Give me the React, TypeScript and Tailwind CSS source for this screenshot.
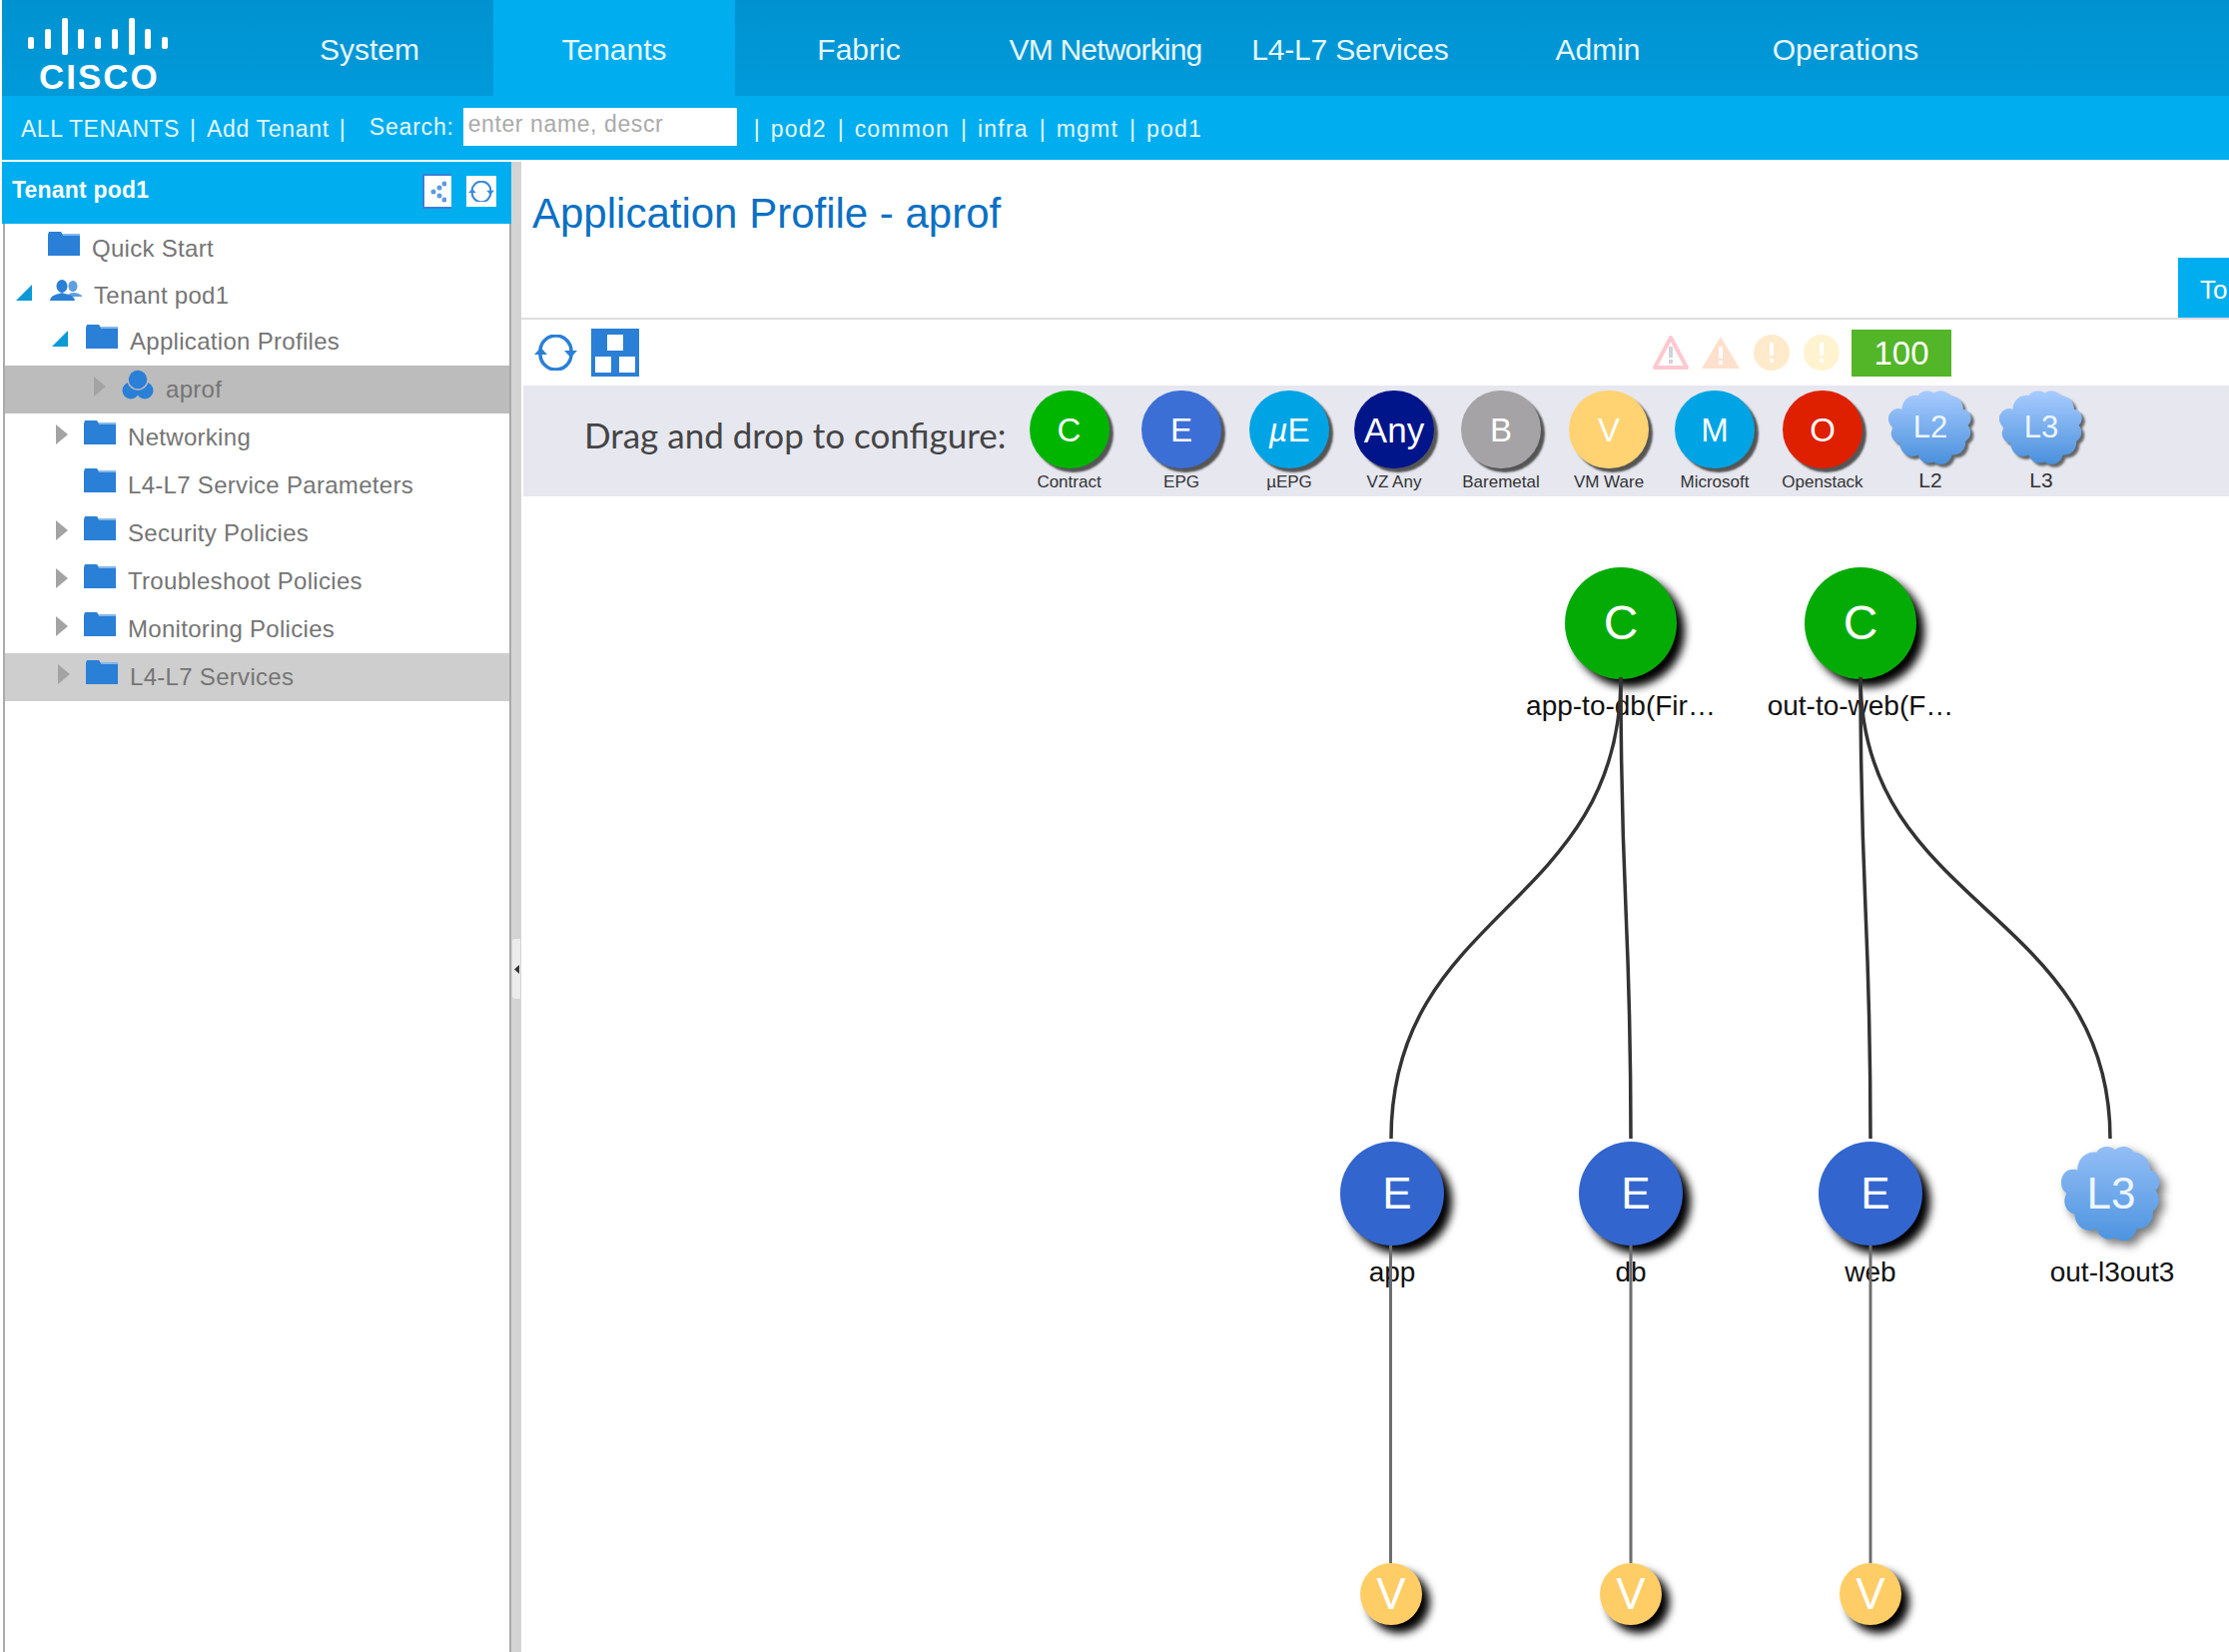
import React from 'react';

const navItems = [
  { label: 'System', width: 'w-[248px]', active: false, extra: '' },
  { label: 'Tenants', width: 'w-[242px]', active: true, extra: '' },
  { label: 'Fabric', width: 'w-[248px]', active: false, extra: '' },
  { label: 'VM Networking', width: 'w-[246px]', active: false, extra: 'tracking-[-0.8px]' },
  { label: 'L4-L7 Services', width: 'w-[244px]', active: false, extra: 'tracking-[-0.2px]' },
  { label: 'Admin', width: 'w-[252px]', active: false, extra: '' },
  { label: 'Operations', width: 'w-[244px]', active: false, extra: '' },
];

const quickTenants = ['pod2', 'common', 'infra', 'mgmt', 'pod1'];

type TreeRow = {
  label: string;
  icon: 'folder' | 'users' | 'profile';
  arrow?: 'open' | 'closed';
  indent: string;
  height: string;
  bg?: string;
};

const treeRows: TreeRow[] = [
  { label: 'Quick Start', icon: 'folder', indent: 'w-[43px]', height: 'h-[48px] pt-[2px]' },
  { label: 'Tenant pod1', icon: 'users', arrow: 'open', indent: 'w-[45px]', height: 'h-[46px] pt-[2px]' },
  { label: 'Application Profiles', icon: 'folder', arrow: 'open', indent: 'w-[81px]', height: 'h-[48px]' },
  { label: 'aprof', icon: 'profile', arrow: 'closed', indent: 'w-[117px]', height: 'h-[48px]', bg: 'bg-[#bcbcbc]' },
  { label: 'Networking', icon: 'folder', arrow: 'closed', indent: 'w-[79px]', height: 'h-[48px]' },
  { label: 'L4-L7 Service Parameters', icon: 'folder', indent: 'w-[79px]', height: 'h-[48px]' },
  { label: 'Security Policies', icon: 'folder', arrow: 'closed', indent: 'w-[79px]', height: 'h-[48px]' },
  { label: 'Troubleshoot Policies', icon: 'folder', arrow: 'closed', indent: 'w-[79px]', height: 'h-[48px]' },
  { label: 'Monitoring Policies', icon: 'folder', arrow: 'closed', indent: 'w-[79px]', height: 'h-[48px]' },
  { label: 'L4-L7 Services', icon: 'folder', arrow: 'closed', indent: 'w-[81px]', height: 'h-[48px]', bg: 'bg-[#cecece]' },
];

const palette = [
  { letter: 'C', label: 'Contract', color: 'bg-[#00b500]', width: 'w-[113px]' },
  { letter: 'E', label: 'EPG', color: 'bg-[#3b6fd6]', width: 'w-[112px]' },
  { letter: 'µE', label: 'µEPG', color: 'bg-[#00a4e4]', width: 'w-[104px]' },
  { letter: 'Any', label: 'VZ Any', color: 'bg-[#00158a]', width: 'w-[106px]' },
  { letter: 'B', label: 'Baremetal', color: 'bg-[#a5a3a5]', width: 'w-[108px]' },
  { letter: 'V', label: 'VM Ware', color: 'bg-[#ffd272]', width: 'w-[108px]' },
  { letter: 'M', label: 'Microsoft', color: 'bg-[#00a4e4]', width: 'w-[104px]' },
  { letter: 'O', label: 'Openstack', color: 'bg-[#de2000]', width: 'w-[112px]' },
];

// graph positions are page coordinates, the canvas starts at 522,497
const ORIGIN_X = 522;
const ORIGIN_Y = 497;

const graphNodes = [
  { x: 1623, y: 624, letter: 'C', label: 'app-to-db(Fir…', size: 'w-[112px] h-[112px]', color: 'bg-[#05ab05]', text: 'text-[48px]', labelY: 707 },
  { x: 1863, y: 624, letter: 'C', label: 'out-to-web(F…', size: 'w-[112px] h-[112px]', color: 'bg-[#05ab05]', text: 'text-[48px]', labelY: 707 },
  { x: 1394, y: 1195, letter: 'E', label: 'app', size: 'w-[104px] h-[104px]', color: 'bg-[#3265ce]', text: 'text-[44px] pl-[10px]', labelY: 1274 },
  { x: 1633, y: 1195, letter: 'E', label: 'db', size: 'w-[104px] h-[104px]', color: 'bg-[#3265ce]', text: 'text-[44px] pl-[10px]', labelY: 1274 },
  { x: 1873, y: 1195, letter: 'E', label: 'web', size: 'w-[104px] h-[104px]', color: 'bg-[#3265ce]', text: 'text-[44px] pl-[10px]', labelY: 1274 },
  { x: 1393, y: 1596, letter: 'V', label: '', size: 'w-[62px] h-[62px]', color: 'bg-[#ffcd66]', text: 'text-[44px]', labelY: 0 },
  { x: 1633, y: 1596, letter: 'V', label: '', size: 'w-[62px] h-[62px]', color: 'bg-[#ffcd66]', text: 'text-[44px]', labelY: 0 },
  { x: 1873, y: 1596, letter: 'V', label: '', size: 'w-[62px] h-[62px]', color: 'bg-[#ffcd66]', text: 'text-[44px]', labelY: 0 },
];

const curves = [
  [1623, 1393],
  [1623, 1633],
  [1863, 1873],
  [1863, 2113],
];

const CLOUD_PATH =
  'M14 22 A12 12 0 0 1 28 10 A10 10 0 0 1 42 8 A10 10 0 0 1 56 10 A12 12 0 0 1 68 22 A8 8 0 0 1 72 36 A9 9 0 0 1 70 50 A11 11 0 0 1 58 62 A10 10 0 0 1 42 68 A10 10 0 0 1 28 62 A11 11 0 0 1 12 52 A9 9 0 0 1 6 38 A9 9 0 0 1 14 22 Z';

const CiscoLogo = () => {
  const bars = [
    [31, 37, 12], [48, 29, 20], [65, 18, 37], [81, 29, 20], [98, 37, 12],
    [115, 29, 20], [132, 18, 37], [148, 29, 20], [165, 37, 12],
  ];
  return (
    <div className="w-[244px] h-full relative shrink-0">
      <svg width="200" height="60" viewBox="2 0 200 60" className="block">
        {bars.map(([x, y, h], i) => (
          <rect key={i} x={x - 3} y={y} width="6" height={h} rx="2" fill="#fff" />
        ))}
      </svg>
      <div className="absolute left-[37px] top-[58px] text-[35px] leading-[38px] font-bold tracking-[2px] text-white">CISCO</div>
    </div>
  );
};

const Folder = () => (
  <svg width="32" height="24" viewBox="0 0 32 24" className="block">
    <path d="M0 3 L1 0 H13 L15 3 H32 V24 H0 Z" fill="#2a7fd6" />
    <rect x="15" y="2" width="17" height="2" fill="#86b8ea" />
  </svg>
);

const Users = () => (
  <svg width="32" height="22" viewBox="0 0 32 22" className="block">
    <ellipse cx="23" cy="6.5" rx="4.5" ry="5.5" fill="#5f9fe2" />
    <path d="M17 17 C19 12 27 12 32 16 V17 Z" fill="#5f9fe2" />
    <ellipse cx="12" cy="6.5" rx="5.5" ry="6.5" fill="#2a7fd6" />
    <path d="M0 21 C1 15 7 15 12 13 C17 15 24 15 25 21 Z" fill="#2a7fd6" />
  </svg>
);

const ProfileIcon = () => (
  <svg width="32" height="30" viewBox="0 0 32 30" className="block">
    <circle cx="9" cy="21" r="8.5" fill="#2a7fd6" />
    <circle cx="23" cy="21" r="8.5" fill="#2a7fd6" />
    <circle cx="16" cy="10" r="10" fill="#2a7fd6" stroke="#bcbcbc" strokeWidth="1.5" />
  </svg>
);

const Arrow = ({ kind }: { kind: 'open' | 'closed' }) =>
  kind === 'open' ? (
    <svg width="16" height="16" viewBox="0 0 16 16" className="block mb-[6px] mr-[2px]">
      <polygon points="0,16 16,16 16,0" fill="#0a9ad6" />
    </svg>
  ) : (
    <svg width="12" height="20" viewBox="0 0 12 20" className="block mb-[6px]">
      <polygon points="0,0 12,10 0,20" fill="#a3a3a3" />
    </svg>
  );

const Refresh = ({ size = 43, color = '#2a7fd6' }: { size?: number; color?: string }) => (
  <svg width={size} height={size * 0.84} viewBox="0 0 43 36" className="block">
    <path d="M6 16 A15.5 15.5 0 0 1 37 17" fill="none" stroke={color} strokeWidth="3.5" />
    <path d="M37 20 A15.5 15.5 0 0 1 6 19" fill="none" stroke={color} strokeWidth="3.5" />
    <polygon points="30,16 43,16 36.5,23" fill={color} />
    <polygon points="0,20 13,20 6.5,13" fill={color} />
  </svg>
);

const LayoutIcon = () => (
  <svg width="48" height="48" viewBox="0 0 48 48" className="block">
    <rect width="48" height="48" fill="#2a7fd6" />
    <rect x="16" y="6" width="16" height="16" fill="#fff" />
    <rect x="4" y="28" width="16" height="16" fill="#fff" />
    <rect x="28" y="28" width="16" height="16" fill="#fff" />
  </svg>
);

const FaultIcons = () => (
  <div className="flex items-center">
    <svg width="38" height="36" viewBox="0 0 38 36" className="block">
      <path d="M19 3 L35 33 H3 Z" fill="#fff" stroke="#ffc8d0" strokeWidth="4" strokeLinejoin="round" />
      <rect x="17" y="12" width="4" height="11" fill="#d2d2da" />
      <rect x="17" y="25" width="4" height="4" fill="#d2d2da" />
    </svg>
    <svg width="38" height="32" viewBox="0 0 38 32" className="block ml-[12px]">
      <path d="M19 0 L38 32 H0 Z" fill="#ffe0cc" />
      <rect x="17" y="10" width="4" height="12" fill="#fff" />
      <rect x="17" y="24" width="4" height="4" fill="#fff" />
    </svg>
    <svg width="36" height="36" viewBox="0 0 36 36" className="block ml-[14px]">
      <circle cx="18" cy="18" r="18" fill="#ffeacc" />
      <rect x="16" y="8" width="4" height="13" fill="#fff" />
      <rect x="16" y="24" width="4" height="4" fill="#fff" />
    </svg>
    <svg width="36" height="36" viewBox="0 0 36 36" className="block ml-[14px]">
      <circle cx="18" cy="18" r="18" fill="#fff3d0" />
      <rect x="16" y="8" width="4" height="13" fill="#fff" />
      <rect x="16" y="24" width="4" height="4" fill="#fff" />
    </svg>
    <div className="ml-[12px] w-[100px] h-[47px] bg-[#53b528] text-white text-[33px] leading-[47px] text-center">100</div>
  </div>
);

const Cloud = ({ id, label, box, text, shadow, top, bottom }: { id: string; label: string; box: string; text: string; shadow: string; top: string; bottom: string }) => (
  <div className={`relative ${box}`}>
    <svg viewBox="2 4 74 68" preserveAspectRatio="none" className={`block w-full h-full ${shadow}`}>
      <defs>
        <linearGradient id={id} x1="0" y1="0" x2="0" y2="1">
          <stop offset="0" stopColor={top} />
          <stop offset="1" stopColor={bottom} />
        </linearGradient>
      </defs>
      <path d={CLOUD_PATH} fill={`url(#${id})`} />
    </svg>
    <div className={`absolute inset-0 flex items-center justify-center text-[#eef6ff] ${text}`}>{label}</div>
  </div>
);

const App: React.FC = () => {
  return (
    <div className="w-[2232px] h-[1654px] overflow-hidden bg-white font-['Liberation_Sans',Arial,sans-serif] flex flex-col pl-[2px]">
      {/* Top navigation */}
      <header className="h-[96px] shrink-0 flex bg-linear-to-b from-[#0092d0] to-[#009ada]">
        <CiscoLogo />
        {navItems.map((item) => (
          <div
            key={item.label}
            className={`${item.width} h-full flex items-center justify-center pt-[2px] text-[30px] text-[#e6f6fd] ${item.extra} ${item.active ? 'bg-[#00aeef]' : ''}`}
          >
            {item.label}
          </div>
        ))}
      </header>

      {/* Tenant bar */}
      <div className="h-[64px] shrink-0 bg-[#00aeef] flex items-center text-[23px] text-[#e6f7fe] pl-[19px] pt-[2px]">
        <span className="tracking-[0.5px]">ALL TENANTS</span>
        <span className="ml-[10px]">|</span>
        <span className="ml-[11px] tracking-[0.7px]">Add Tenant</span>
        <span className="ml-[10px]">|</span>
        <span className="ml-[24px] mb-[4px] tracking-[0.8px]">Search:</span>
        <div className="ml-[9px] mb-[4px] w-[274px] h-[38px] bg-white text-[#aaa] text-[23px] leading-[32px] pl-[5px] tracking-[0.6px]">enter name, descr</div>
        <span className="ml-[17px]">|</span>
        {quickTenants.map((t, i) => (
          <React.Fragment key={t}>
            <span className="ml-[11px] tracking-[1.2px]">{t}</span>
            {i < quickTenants.length - 1 && <span className="ml-[11px]">|</span>}
          </React.Fragment>
        ))}
      </div>

      <div className="flex-1 flex mt-[2px] min-h-0">
        {/* Sidebar */}
        <aside className="w-[510px] shrink-0 flex flex-col">
          <div className="h-[62px] shrink-0 bg-[#00aeef] flex items-center pl-[10px] pr-[15px]">
            <span className="text-[23px] font-bold text-white flex-1 mb-[6px] tracking-[0.2px]">Tenant pod1</span>
            <div className="w-[29px] h-[35px] bg-white border-2 border-r-0 border-[#3a7fd8] flex items-center justify-center mb-[3px]">
              <svg width="16" height="22" viewBox="0 0 16 22" className="block">
                <circle cx="3" cy="11" r="2.5" fill="#5b9be0" />
                <circle cx="9" cy="7" r="2.5" fill="#5b9be0" />
                <circle cx="9" cy="15" r="2.5" fill="#5b9be0" />
                <circle cx="14" cy="3" r="2.5" fill="#5b9be0" />
                <circle cx="14" cy="19" r="2.5" fill="#5b9be0" />
              </svg>
            </div>
            <div className="ml-[15px] w-[30px] h-[31px] bg-white flex items-center justify-center mb-[3px]">
              <Refresh size={26} color="#3a8ada" />
            </div>
          </div>
          <div className="flex-1 ml-[1px] border-l-2 border-r-2 border-[#aaaaaa]">
            {treeRows.map((row) => (
              <div key={row.label} className={`${row.height} ${row.bg ?? ''} flex items-center`}>
                <div className={`${row.indent} shrink-0 flex justify-end pr-[16px]`}>
                  {row.arrow && <Arrow kind={row.arrow} />}
                </div>
                <div className="w-[32px] shrink-0 mb-[10px]">
                  {row.icon === 'folder' && <Folder />}
                  {row.icon === 'users' && <Users />}
                  {row.icon === 'profile' && <ProfileIcon />}
                </div>
                <span className="ml-[12px] text-[24px] text-[#757575] tracking-[0.3px]">{row.label}</span>
              </div>
            ))}
          </div>
        </aside>

        {/* Splitter */}
        <div className="w-[10px] shrink-0 bg-[#d4d4d4] pt-[778px]">
          <div className="w-[8px] ml-[1px] h-[60px] bg-[#ececec] rounded-l-[3px] flex items-center justify-center">
            <svg width="5" height="9" viewBox="0 0 5 9" className="block">
              <polygon points="5,0 0,4.5 5,9" fill="#333" />
            </svg>
          </div>
        </div>

        {/* Main content */}
        <main className="flex-1 flex flex-col min-w-0">
          <div className="h-[158px] shrink-0 border-b-2 border-[#dddddd] flex justify-between pl-[11px]">
            <h1 className="text-[42px] leading-[46px] mt-[29px] text-[#0a70c4] font-normal">Application Profile - aprof</h1>
            <div className="self-end w-[51px] h-[60px] bg-[#00aeef] text-white text-[26px] leading-[64px] pl-[22px] overflow-hidden">To</div>
          </div>

          <div className="h-[66px] shrink-0 flex items-center pl-[13px] pr-[278px]">
            <Refresh />
            <div className="ml-[14px]">
              <LayoutIcon />
            </div>
            <div className="flex-1" />
            <FaultIcons />
          </div>

          <div className="h-[111px] shrink-0 ml-[2px] bg-[#e6e7ef] flex">
            <div className="w-[490px] shrink-0 pl-[61px] pt-[28px] text-[35px] leading-[42px] text-[#444] font-['Lato',sans-serif] whitespace-nowrap">
              Drag and drop to configure:
            </div>
            {palette.map((item) => (
              <div key={item.label} className={`${item.width} shrink-0 flex flex-col items-center pt-[5px]`}>
                <div className={`w-[80px] h-[78px] rounded-full ${item.color} shadow-[4px_4px_2px_#555] flex items-center justify-center pt-[2px] text-white ${item.letter === 'Any' ? 'text-[35px]' : 'text-[33px]'}`}>
                  {item.letter === 'µE' ? (
                    <>
                      <i>µ</i>E
                    </>
                  ) : (
                    item.letter
                  )}
                </div>
                <div className="mt-[4px] text-[17px] leading-[20px] text-[#333] whitespace-nowrap">{item.label}</div>
              </div>
            ))}
            <div className="w-[104px] shrink-0 flex flex-col items-center pt-[3px]">
              <Cloud id="pal-l2" label="L2" box="w-[84px] h-[78px]" text="text-[31px]" shadow="drop-shadow-[3px_3px_1px_#666]" top="#a8ccff" bottom="#4a90dc" />
              <div className="mt-[3px] text-[21px] leading-[22px] text-[#333]">L2</div>
            </div>
            <div className="w-[118px] shrink-0 flex flex-col items-center pt-[3px]">
              <Cloud id="pal-l3" label="L3" box="w-[84px] h-[78px]" text="text-[31px]" shadow="drop-shadow-[3px_3px_1px_#666]" top="#a8ccff" bottom="#4a90dc" />
              <div className="mt-[3px] text-[21px] leading-[22px] text-[#333]">L3</div>
            </div>
          </div>

          {/* Topology canvas */}
          <div className="flex-1 relative overflow-hidden">
            {graphNodes.map((node, i) => (
              <React.Fragment key={i}>
                <div
                  className={`absolute -translate-x-1/2 -translate-y-1/2 rounded-full ${node.size} ${node.color} shadow-[8px_8px_9px_#000] flex items-center justify-center text-white ${node.text}`}
                  style={{ left: node.x - ORIGIN_X, top: node.y - ORIGIN_Y }}
                >
                  {node.letter}
                </div>
                {node.label && (
                  <div
                    className="absolute -translate-x-1/2 -translate-y-1/2 whitespace-nowrap text-[28px] leading-[32px] text-[#111]"
                    style={{ left: node.x - ORIGIN_X, top: node.labelY - ORIGIN_Y }}
                  >
                    {node.label}
                  </div>
                )}
              </React.Fragment>
            ))}
            <div className="absolute left-[1542px] top-[648px] w-[100px]">
              <Cloud id="graph-l3" label="L3" box="w-[100px] h-[100px]" text="text-[44px]" shadow="drop-shadow-[5px_5px_5px_#777]" top="#93bef6" bottom="#4d94e0" />
            </div>
            <div className="absolute left-[1593px] top-[777px] -translate-x-1/2 -translate-y-1/2 whitespace-nowrap text-[28px] leading-[32px] text-[#111]">out-l3out3</div>
            <svg width="1710" height="1157" viewBox={`${ORIGIN_X} ${ORIGIN_Y} 1710 1157`} className="absolute left-0 top-0 pointer-events-none">
              {curves.map(([from, to], i) => (
                <path key={i} d={`M${from} 678 C${from} 910 ${to} 910 ${to} 1140`} fill="none" stroke="#333" strokeWidth="3.5" />
              ))}
              {[1392.5, 1633, 1873].map((x) => (
                <line key={x} x1={x} y1="1247" x2={x} y2="1565" stroke="#6e6e6e" strokeWidth="3" />
              ))}
            </svg>
          </div>
        </main>
      </div>
    </div>
  );
};

export default App;
